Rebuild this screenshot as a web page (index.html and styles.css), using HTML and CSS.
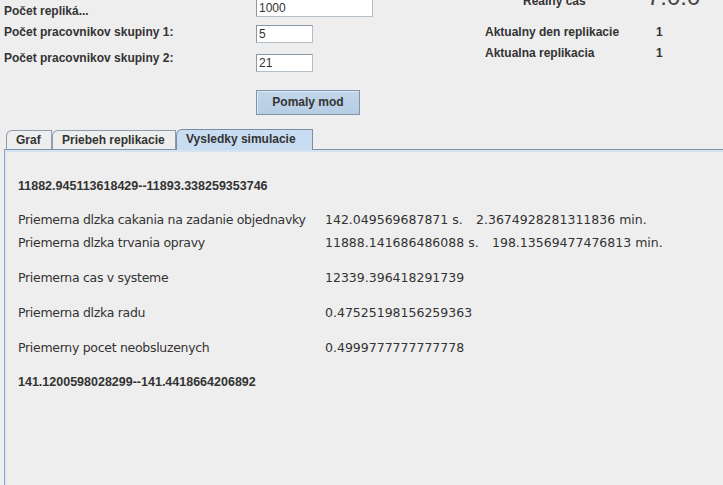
FILE: index.html
```html
<!DOCTYPE html>
<html>
<head>
<meta charset="utf-8">
<link rel="stylesheet" href="styles.css">
</head>
<body>
<div class="app">
  <div class="top">
    <div class="labels">
      <div class="lbl l1">Počet repliká...</div>
      <div class="lbl l2">Počet pracovnikov skupiny 1:</div>
      <div class="lbl l3">Počet pracovnikov skupiny 2:</div>
    </div>
    <div class="inputs">
      <div class="field wide">1000</div>
      <div class="field narrow f2">5</div>
      <div class="field narrow f3">21</div>
      <div class="btn">Pomaly mod</div>
    </div>
    <div class="stats">
      <div class="realny">
        <span class="realny-label">Realny cas</span>
        <span class="clock">7:0:0</span>
      </div>
      <div class="stat s1"><span class="stat-label">Aktualny den replikacie</span><span>1</span></div>
      <div class="stat s2"><span class="stat-label">Aktualna replikacia</span><span>1</span></div>
    </div>
  </div>
  <div class="tabs">
    <div class="tab t-graf">Graf</div>
    <div class="tab t-priebeh">Priebeh replikacie</div>
    <div class="tab t-vysl selected">Vysledky simulacie</div>
  </div>
  <div class="panel">
    <div class="bold-line b1">11882.945113618429--11893.338259353746</div>
    <div class="row r1"><span class="name">Priemerna dlzka cakania na zadanie objednavky</span><span class="val"><span class="part w1">142.049569687871 s.</span><span>2.3674928281311836 min.</span></span></div>
    <div class="row r2"><span class="name">Priemerna dlzka trvania opravy</span><span class="val"><span class="part w2">11888.141686486088 s.</span><span>198.13569477476813 min.</span></span></div>
    <div class="row r3"><span class="name">Priemerna cas v systeme</span><span class="val">12339.396418291739</span></div>
    <div class="row r4"><span class="name">Priemerna dlzka radu</span><span class="val">0.47525198156259363</span></div>
    <div class="row r5"><span class="name">Priemerny pocet neobsluzenych</span><span class="val">0.4999777777777778</span></div>
    <div class="bold-line b2">141.1200598028299--141.4418664206892</div>
  </div>
</div>
</body>
</html>
```
FILE: styles.css
```css
html, body {
  margin: 0;
  padding: 0;
  background: #eeeeee;
  overflow: hidden;
  width: 723px;
  height: 485px;
}
body {
  font-family: "Liberation Sans", Arial, sans-serif;
  color: #333333;
}
.app {
  display: flex;
  flex-direction: column;
}
.top {
  display: flex;
  margin-top: -20px;
  height: 149px;
}
.labels {
  width: 252px;
  padding-left: 4px;
  padding-top: 21px;
}
.lbl {
  font-weight: bold;
  font-size: 12px;
  line-height: 20px;
  white-space: nowrap;
}
.l2 { margin-top: 1px; }
.l3 { margin-top: 6px; }

.inputs {
  width: 229px;
  padding-top: 19px;
  display: flex;
  flex-direction: column;
  align-items: flex-start;
}
.field {
  box-sizing: border-box;
  height: 18px;
  background: #ffffff;
  border: 1px solid #8a98a5;
  border-right-color: #b4bec7;
  border-bottom-color: #b4bec7;
  font-size: 12px;
  line-height: 16px;
  padding-left: 2px;
}
.wide { width: 117px; }
.narrow { width: 57px; }
.f2 { margin-top: 8px; }
.f3 { margin-top: 11px; }
.btn {
  box-sizing: border-box;
  margin-top: 18px;
  width: 104px;
  height: 25px;
  border: 1px solid #7f94aa;
  background: linear-gradient(#c2d6ea, #b6cde4);
  box-shadow: inset 1px 1px 0 #dde9f5;
  font-weight: bold;
  font-size: 12px;
  line-height: 23px;
  text-align: center;
}

.stats {
  flex: 1;
  padding-top: 3px;
}
.realny {
  display: flex;
  align-items: baseline;
  height: 28px;
  padding-left: 38px;
}
.realny-label {
  width: 124px;
  font-weight: bold;
  font-size: 12px;
}
.clock {
  font-size: 24px;
  line-height: 28px;
  color: #444444;
}
.stat {
  display: flex;
  font-weight: bold;
  font-size: 12px;
  line-height: 20px;
}
.s1 { margin-top: 11px; }
.s2 { margin-top: 1px; }
.stat-label { width: 171px; }

.tabs {
  display: flex;
  align-items: flex-end;
  height: 20px;
  padding-left: 6px;
  position: relative;
  z-index: 1;
}
.tab {
  box-sizing: border-box;
  height: 19px;
  border: 1px solid #8e9dac;
  border-bottom: none;
  border-top-left-radius: 6px;
  font-weight: bold;
  font-size: 12px;
  line-height: 18px;
  padding-left: 9px;
  white-space: nowrap;
  background: #eeeeee;
}
.t-graf { width: 46px; }
.t-priebeh { width: 124px; }
.t-vysl { width: 137px; }
.tab.selected {
  height: 21px;
  margin-bottom: -1px;
  background: #c8ddf2;
  border-color: #7a8da3;
  line-height: 19px;
}

.panel {
  box-sizing: border-box;
  margin-left: 4px;
  width: 740px;
  height: 336px;
  border-top: 1px solid #7c93ab;
  border-left: 1px solid #8ea4c6;
  box-shadow: inset 0 2px 0 #d6e4f2, inset 1px 0 0 #d6e4f2;
  padding-top: 26px;
  padding-left: 13px;
}
.bold-line {
  font-weight: bold;
  font-size: 12.5px;
  line-height: 20px;
}
.row {
  display: flex;
  font-family: "DejaVu Sans", sans-serif;
  font-size: 12.5px;
  line-height: 20px;
  white-space: nowrap;
}
.name {
  width: 307px;
  letter-spacing: -0.3px;
}
.val {
  display: flex;
}
.part { display: inline-block; }
.w1 { width: 151px; }
.w2 { width: 167px; }
.r1 { margin-top: 14px; }
.r2 { margin-top: 3px; }
.r3 { margin-top: 15px; }
.r4 { margin-top: 15px; }
.r5 { margin-top: 15px; }
.b2 { margin-top: 14px; }
```
